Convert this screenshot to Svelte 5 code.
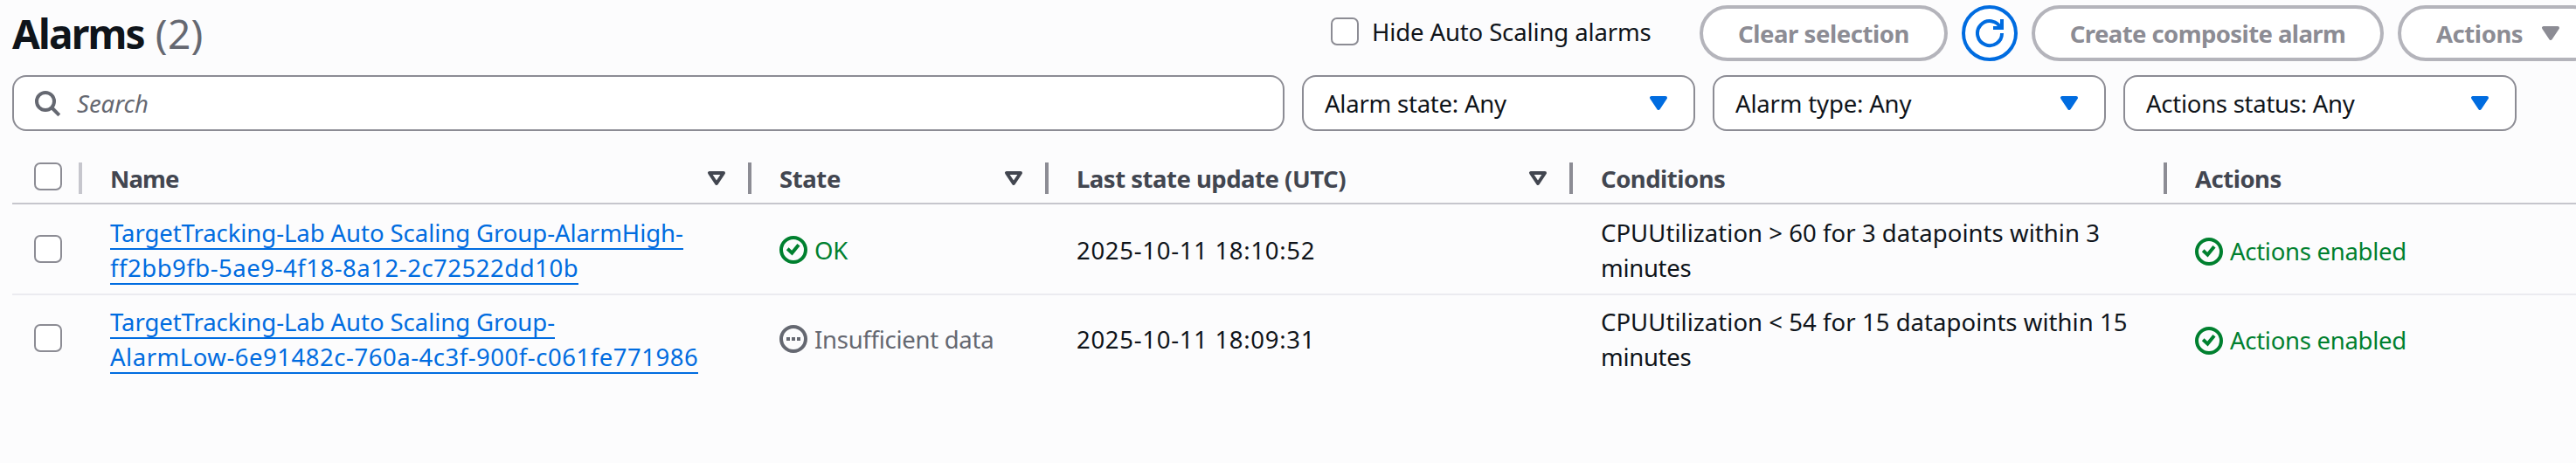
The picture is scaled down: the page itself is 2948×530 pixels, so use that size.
<script>
  const filters = [
    { label: 'Alarm state: Any', track: -0.22 },
    { label: 'Alarm type: Any', track: -0.17 },
    { label: 'Actions status: Any', track: -0.26 }
  ];
  const columns = [
    { label: 'Name', sort: true, track: -0.9 },
    { label: 'State', sort: true, track: -0.4 },
    { label: 'Last state update (UTC)', sort: true, track: -0.5 },
    { label: 'Conditions', sort: false, track: -0.5 },
    { label: 'Actions', sort: false, track: -0.5 }
  ];
  const alarms = [
    {
      name: [['TargetTracking-Lab Auto Scaling Group-AlarmHigh-', -0.06], ['ff2bb9fb-5ae9-4f18-8a12-2c72522dd10b', 0.52]],
      ok: true,
      state: 'OK',
      updated: '2025-10-11 18:10:52',
      condition: 'CPUUtilization > 60 for 3 datapoints within 3'
    },
    {
      name: [['TargetTracking-Lab Auto Scaling Group-', -0.06], ['AlarmLow-6e91482c-760a-4c3f-900f-c061fe771986', 0.52]],
      ok: false,
      state: 'Insufficient data',
      updated: '2025-10-11 18:09:31',
      condition: 'CPUUtilization < 54 for 15 datapoints within 15'
    }
  ];
</script>

{#snippet caret(kind)}
  <svg class="icon caret {kind}" viewBox="0 0 16 16"><path d="M4 5h8l-4 6z" /></svg>
{/snippet}

{#snippet check()}
  <svg class="icon line" viewBox="0 0 16 16">
    <circle cx="8" cy="8" r="7" /><path d="M4.6 7.4 7.2 9.8 11 5.1" />
  </svg>
{/snippet}

<main>
  <header>
    <h1>Alarms <span>(2)</span></h1>
    <label class="hide"><i class="box"></i><span class="text">Hide Auto Scaling alarms</span></label>
    <div class="buttons">
      <button class="clear"><span class="text">Clear selection</span></button>
      <button class="refresh" aria-label="Refresh">
        <svg class="icon line" viewBox="0 0 16 16">
          <path d="M10 5h5V0" /><path d="M15 8a7 7 0 1 1-.7-3" />
        </svg>
      </button>
      <button class="create"><span class="text">Create composite alarm</span></button>
      <button class="menu"><span class="text">Actions</span> {@render caret('muted')}</button>
    </div>
  </header>

  <section class="filters">
    <div class="field search">
      <svg class="icon" viewBox="0 0 32 32"><circle cx="14" cy="14" r="10" /><path d="m21 21 8.8 8.8" /></svg>
      <em class="text">Search</em>
    </div>
    {#each filters as f}
      <div class="field select">
        <span class="text" style="letter-spacing:{f.track}px">{f.label}</span>{@render caret('blue')}
      </div>
    {/each}
  </section>

  <section class="table">
    <div class="row head">
      <div class="cell pick"><i class="box"></i><b class="divider light"></b></div>
      {#each columns as c, i}
        <div class="cell">
          <span class="text" style="letter-spacing:{c.track}px">{c.label}</span>
          <div class="tools">
            {#if c.sort}{@render caret('hollow')}{/if}
            {#if i < columns.length - 1}<b class="divider"></b>{/if}
          </div>
        </div>
      {/each}
    </div>
    {#each alarms as a}
      <div class="row body">
        <div class="cell pick"><i class="box"></i></div>
        <div class="cell name">
          {#each a.name as [text, track]}<a href="#top" style="letter-spacing:{track}px">{text}</a>{/each}
        </div>
        <div class="cell status" class:ok={a.ok}>
          {#if a.ok}
            {@render check()}
          {:else}
            <svg class="icon line" viewBox="0 0 16 16">
              <circle cx="8" cy="8" r="7" /><path d="M4 8h2M7 8h2M10 8h2" />
            </svg>
          {/if}
          <span class="text">{a.state}</span>
        </div>
        <div class="cell date"><span class="text">{a.updated}</span></div>
        <div class="cell cond"><span>{a.condition}</span><span class="unit">minutes</span></div>
        <div class="cell status ok enabled">{@render check()}<span>Actions enabled</span></div>
      </div>
    {/each}
  </section>
</main>

<style>
  :global(body) {
    background: #fcfcfd;
    overflow: hidden;
  }
  main {
    box-sizing: border-box;
    width: 2948px;
    height: 530px;
    padding: 6px 0 0 14px;
    overflow: hidden;
    background: #fcfcfd;
    color: #0f141a;
    font: 27.5px/40px 'Noto Sans', 'Open Sans', sans-serif;
    white-space: nowrap;
  }
  main * {
    box-sizing: border-box;
  }
  .text {
    padding-top: 2px;
  }
  header {
    display: grid;
    grid-template-columns: 1509px 422px auto;
    height: 64px;
    align-items: center;
  }
  h1 {
    display: flex;
    gap: 13px;
    margin: 0;
    font-size: 46px;
    line-height: 64px;
    font-weight: 700;
    letter-spacing: -1.8px;
  }
  h1 span {
    font-weight: 400;
    color: #656871;
    letter-spacing: 0.3px;
  }
  .hide {
    display: flex;
    align-items: center;
    gap: 15px;
    padding-bottom: 4px;
    letter-spacing: -0.12px;
  }
  .box {
    flex: none;
    width: 32px;
    height: 32px;
    border: 2px solid #8c8c94;
    border-radius: 7px;
    background: #fff;
  }
  .buttons {
    display: flex;
    gap: 16px;
  }
  button {
    display: flex;
    flex: none;
    align-items: center;
    justify-content: center;
    height: 64px;
    padding: 0;
    border: 4px solid #b4b4bb;
    border-radius: 32px;
    background: #fff;
    color: #8c8c94;
    font: inherit;
    font-weight: 700;
    letter-spacing: -0.43px;
  }
  .clear {
    width: 284px;
  }
  .refresh {
    width: 64px;
    border-color: #006ce0;
    color: #006ce0;
  }
  .create {
    width: 403px;
    letter-spacing: -0.58px;
  }
  .menu {
    width: 232px;
    padding-left: 40px;
    justify-content: flex-start;
    gap: 16px;
  }
  .icon {
    flex: none;
    width: 32px;
    height: 32px;
    overflow: visible;
    fill: none;
    stroke: currentColor;
    stroke-width: 2;
  }
  .caret {
    stroke-linejoin: round;
    fill: currentColor;
  }
  .blue {
    color: #006ce0;
  }
  .hollow {
    fill: none;
  }
  .filters {
    display: flex;
    gap: 20px;
    margin-top: 16px;
  }
  .field {
    display: flex;
    align-items: center;
    width: 450px;
    height: 64px;
    border: 2px solid #8c8c94;
    border-radius: 16px;
    background: #fff;
  }
  .search {
    width: 1456px;
    gap: 18px;
    padding-left: 22px;
    color: #656871;
  }
  .search .icon {
    stroke-width: 4;
  }
  .select {
    justify-content: space-between;
    padding: 0 24px;
  }
  .table {
    margin-top: 26px;
  }
  .row {
    display: grid;
    grid-template-columns: 80px 766px 340px 600px 680px 1fr;
  }
  .cell {
    display: flex;
    align-items: center;
    padding-left: 32px;
  }
  .head {
    height: 58px;
    border-bottom: 2px solid #c6c6cd;
    color: #424650;
    font-weight: 700;
  }
  .head .cell {
    justify-content: space-between;
  }
  .tools {
    display: flex;
    align-items: center;
    gap: 20px;
  }
  .divider {
    width: 4px;
    height: 36px;
    background: #8c8c94;
  }
  .light {
    background: #c6c6cd;
  }
  .cell.pick {
    padding-left: 25px;
  }
  .head .box {
    margin-bottom: 4px;
  }
  .body {
    height: 104px;
    padding: 12px 0 10px;
    border-bottom: 2px solid #ebebf0;
  }
  .body + .body {
    height: 100px;
    padding-top: 10px;
    border: 0;
  }
  .body .box {
    margin-bottom: 2px;
  }
  .name,
  .cond {
    flex-direction: column;
    align-items: flex-start;
  }
  a,
  .cond span {
    height: 40px;
    padding-top: 1px;
  }
  a {
    border-bottom: 2px solid #006ce0;
    color: #006ce0;
    text-decoration: none;
  }
  .status {
    gap: 8px;
    color: #656871;
    letter-spacing: -0.28px;
  }
  .ok {
    color: #00802f;
  }
  .enabled {
    padding-top: 4px;
  }
  .date {
    letter-spacing: 0.7px;
  }
  .cond {
    letter-spacing: 0.05px;
  }
  .unit {
    letter-spacing: -0.3px;
  }
</style>
